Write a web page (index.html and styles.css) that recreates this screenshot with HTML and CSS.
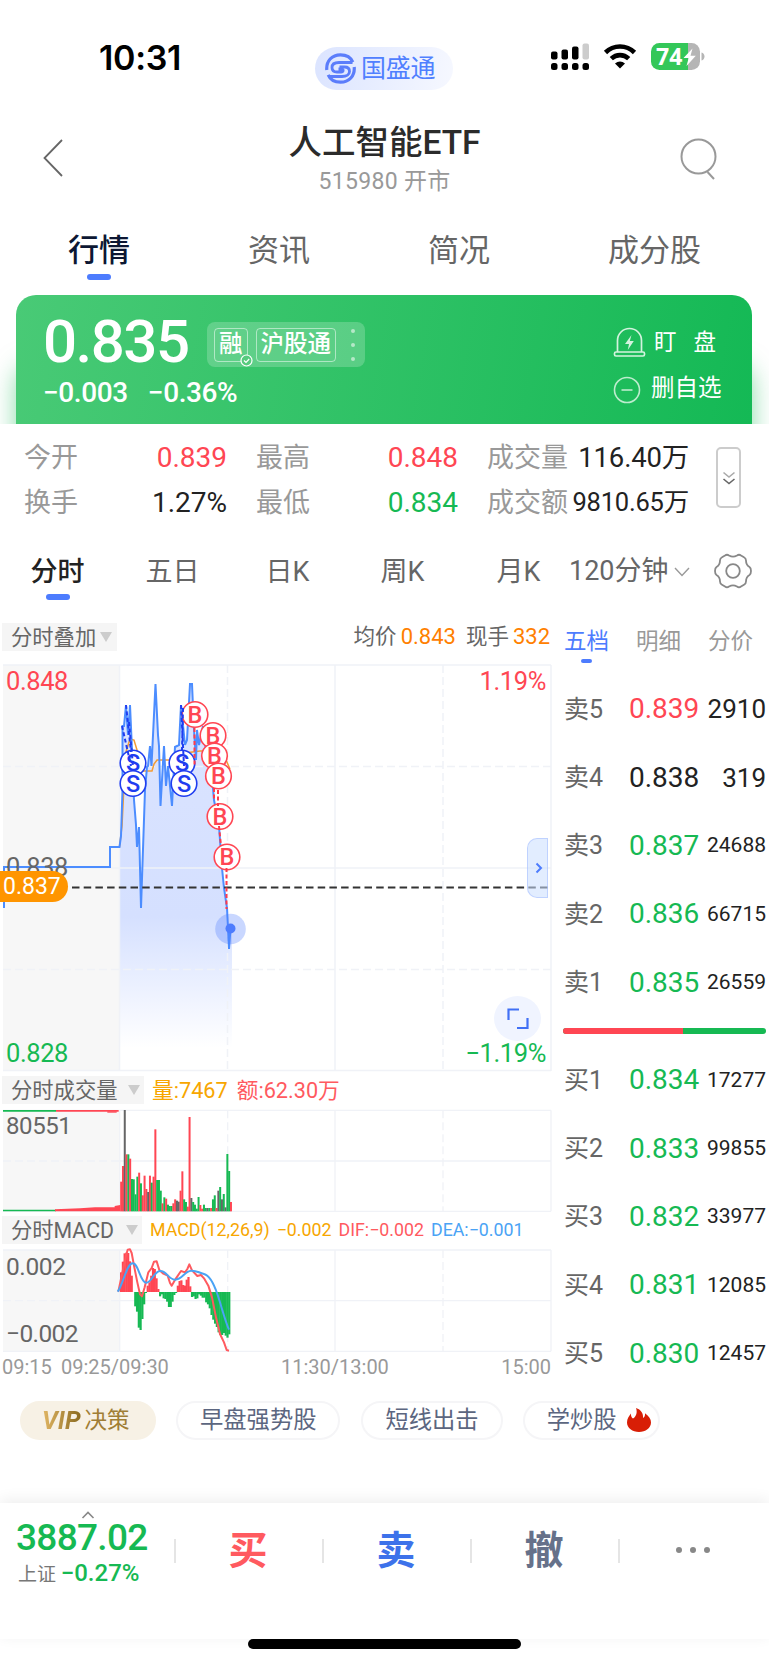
FILE: index.html
```html
<!DOCTYPE html>
<html lang="zh-CN">
<head>
    <meta charset="UTF-8">
    <meta name="viewport" content="width=device-width, initial-scale=1.0">
    <title>人工智能ETF 515980</title>
    <link rel="stylesheet" href="styles.css">
</head>
<body>
    <div class="status-bar">
        <span class="clock">10:31</span>
        <div class="brand">
            <svg width="31" height="31" viewBox="0 0 31 31" fill="none" stroke="#5b7dfb">
                <path d="M1.800 17C1 8 7 1.800 15.500 1.800c6 0 10.500 3 12.300 7.300" stroke-width="3.200"/>
                <path d="M29.200 14C30 23 24 29.200 15.500 29.200c-6 0-10.500-3-12.300-7.300" stroke-width="3.200"/>
                <path d="M27.500 9.500H14c-4.500 0-7 2-7 5s2 4.500 5 4.500h4c2.500 0 3-3 .5-3h-3" stroke-width="2.800"/>
                <path d="M3.500 23.500H17c4.500 0 7.500-2 7.500-5s-2-4.500-5-4.500h-5" stroke-width="2.800"/>
            </svg>
            <span>国盛通</span>
        </div>
        <div class="status-icons">
            <svg width="39" height="28" viewBox="0 0 39 28">
                <rect x="0" y="8.500" width="6.500" height="8" rx="2"/>
                <rect x="10.500" y="6.500" width="6.500" height="10" rx="2"/>
                <rect x="21" y="3.500" width="6.500" height="13" rx="2"/>
                <rect x="31.500" y="0.500" width="6.500" height="16" rx="2" fill="#ccc"/>
                <rect x="0" y="20" width="6.500" height="7" rx="2.500"/>
                <rect x="10.500" y="20" width="6.500" height="7" rx="2.500"/>
                <rect x="21" y="20" width="6.500" height="7" rx="2.500"/>
                <rect x="31.500" y="20" width="6.500" height="7" rx="2.500"/>
            </svg>
            <svg class="wifi" width="34" height="26" viewBox="0 0 34 26" fill="none" stroke="#000" stroke-width="4.600">
                <path d="M2.500 9.500c8-8 21-8 29 0"/>
                <path d="M8.300 15.700c5-4.800 12.400-4.800 17.400 0"/>
                <path d="M12 20.500c3-2.800 7-2.800 10 0l-5 5z" fill="#000" stroke="none"/>
            </svg>
            <div class="battery">
                <span class="cell">74</span>
                <svg width="54" height="28" viewBox="0 0 54 28">
                    <path d="M50.500 9.500c4 1 4 7 0 8z" fill="#b5b5b5"/>
                    <path d="M41.500 5.500L32.500 15h5.200l-2.200 8 9.300-10.300h-5.300z" fill="#fff"/>
                </svg>
            </div>
        </div>
    </div>

    <div class="title-bar">
        <svg class="back" width="20" height="38" viewBox="0 0 20 38" fill="none" stroke="#666" stroke-width="1.800"><path d="M19 1L1.500 19 19 37"/></svg>
        <div class="title">
            <h1>人工智能ETF</h1>
            <p>515980 开市</p>
        </div>
        <svg class="search" width="38" height="43" viewBox="0 0 38 43" fill="none" stroke="#999" stroke-width="2"><circle cx="18.500" cy="18.500" r="17"/><path d="M27.500 34l6.500 7"/></svg>
    </div>

    <div class="main-tabs">
        <span class="active">行情</span>
        <span>资讯</span>
        <span>简况</span>
        <span>成分股</span>
    </div>

    <div class="quote-wrap">
        <div class="quote-card">
            <div class="quote-left">
                <div class="price-row">
                    <span class="price">0.835</span>
                    <div class="badges">
                        <span class="badge margin-badge">融
                            <svg width="13" height="13" viewBox="0 0 13 13"><circle cx="6.500" cy="6.500" r="5.500" fill="#57cb7e" stroke="#fff" stroke-width="1.200"/><path d="M4 6.500l2 2L9.200 5" fill="none" stroke="#fff" stroke-width="1.200"/></svg>
                        </span>
                        <span class="badge">沪股通</span>
                        <span class="more-dots"><i></i><i></i><i></i></span>
                    </div>
                </div>
                <div class="change"><span>−0.003</span><span>−0.36%</span></div>
            </div>
            <div class="quote-actions">
                <div class="action">
                    <svg width="33" height="31" viewBox="0 0 33 31" fill="none" stroke="#d3f3de" stroke-width="1.700">
                        <path d="M4.500 25V13.500a12 12 0 0 1 24 0V25"/>
                        <rect x="1.500" y="25" width="30" height="4" rx="1.500"/>
                        <path d="M18.500 8L12 17h4l-1.200 6 6-9h-4z" fill="#d3f3de" stroke="none"/>
                    </svg>
                    <span class="wide">盯盘</span>
                </div>
                <div class="action">
                    <svg width="28" height="28" viewBox="0 0 28 28" fill="none" stroke="#bdecce" stroke-width="1.600"><circle cx="14" cy="14" r="12.500"/><path d="M8.500 14h11"/></svg>
                    <span class="remove">删自选</span>
                </div>
            </div>
        </div>
    </div>

    <div class="stats">
        <div class="stat-grid">
            <div class="stat"><span>今开</span><b class="up">0.839</b></div>
            <div class="stat"><span>最高</span><b class="up">0.848</b></div>
            <div class="stat"><span>成交量</span><b class="amount">116.40万</b></div>
            <div class="stat"><span>换手</span><b>1.27%</b></div>
            <div class="stat"><span>最低</span><b class="down">0.834</b></div>
            <div class="stat"><span>成交额</span><b class="amount small">9810.65万</b></div>
        </div>
        <div class="expand">
            <svg width="14" height="16" viewBox="0 0 14 16" fill="none" stroke-width="1.600"><path d="M1.500 1.500L7 6l5.500-4.500" stroke="#aaa"/><path d="M1.500 8L7 12.500 12.500 8" stroke="#666"/></svg>
        </div>
    </div>

    <div class="period-tabs">
        <span class="active">分时</span>
        <span>五日</span>
        <span>日K</span>
        <span>周K</span>
        <span>月K</span>
        <span class="minutes">120分钟<svg width="16" height="10" viewBox="0 0 16 10" fill="none" stroke="#999" stroke-width="1.400"><path d="M1 1l7 7.500L15 1"/></svg></span>
        <svg class="gear" width="38" height="36" viewBox="0 0 38 36" fill="none" stroke="#888" stroke-width="1.800" stroke-linejoin="round">
            <path d="M11 2.500Q13 1 15 2.500q4 2.200 8 0Q25 1 27 2.500l3 1.800q2 1 2 3.200 0 4.500 3.500 6.500 1.500 1 1.500 4t-1.500 4Q32 24 32 28.500q0 2.200-2 3.200l-3 1.800q-2 1.500-4 0-4-2.200-8 0-2 1.500-4 0l-3-1.800q-2-1-2-3.200Q6 24 2.500 22 1 21 1 18t1.500-4Q6 12 6 7.500q0-2.200 2-3.200z"/>
            <circle cx="19" cy="18" r="6.800"/>
        </svg>
    </div>

    <div class="trade">
        <div class="charts">
            <div class="chart-head">
                <span class="picker overlay-picker">分时叠加<i></i></span>
                <div class="legend"><span>均价</span><b>0.843</b><span>现手</span><b>332</b></div>
            </div>
            <div class="plot price-plot">
                <svg width="552" height="410" viewBox="0 663 552 410">
                    <defs>
                        <linearGradient id="area" x1="0" y1="684" x2="0" y2="1071" gradientUnits="userSpaceOnUse">
                            <stop offset="0" stop-color="#dbe4ff"/>
                            <stop offset="0.600" stop-color="#d5e0ff"/>
                            <stop offset="0.940" stop-color="#fff"/>
                        </linearGradient>
                    </defs>
                    <rect x="3" y="665" width="117" height="406" fill="#f7f7f7"/>
                    <polygon id="price-area" fill="url(#area)"/>
                    <g class="grid">
                        <path d="M3 665H551M3 868H551M3 1070.500H551M119.500 665V1071M335 665V1071M551 665V1071"/>
                        <path class="dashed" d="M3 766.500H551M3 969.500H551M227.500 665V1071M443 665V1071"/>
                    </g>
                    <polyline class="avg-line" points="119.500,847 122,826 124,785 126,752 130,739 134,740 137,750 140,768 143,771 152,771 154,764 157,760 180,760 185,753 200,751 215,751 226,760 230,769"/>
                    <polyline id="price-line" class="price-line"/>
                    <path d="M68 887.500H551" stroke="#333" stroke-width="2" stroke-dasharray="7.500 4.200" stroke-dashoffset="-4"/>
                    <g id="markers"></g>
                    <g class="trade-dash">
                        <path d="M126 705L131 752M122 726L131 766M129 722L133 766M181 705L184 766M183 708L182 750" stroke="#1f3df0"/>
                        <path d="M194.500 728V766M214 788V800M218 790V806M219 826L221 846M226.500 868V909" stroke="#ff3b4b"/>
                    </g>
                    <circle cx="230.500" cy="929" r="15.300" fill="#4d7cfe" opacity="0.300"/>
                    <circle cx="230.500" cy="928.500" r="5" fill="#4d7cfe"/>
                </svg>
                <span class="tick top-left up">0.848</span>
                <span class="tick top-right up">1.19%</span>
                <span class="tick mid-left">0.838</span>
                <span class="tick bottom-left down">0.828</span>
                <span class="tick bottom-right down">−1.19%</span>
                <span class="cursor-price">0.837</span>
                <span class="drawer"><svg width="8" height="12" viewBox="0 0 8 12" fill="none" stroke="#4d7cfe" stroke-width="2"><path d="M1.500 1.500L6 6l-4.500 4.500"/></svg></span>
                <span class="fullscreen"><svg width="22" height="22" viewBox="0 0 22 22" fill="none" stroke="#4170f5" stroke-width="2.200"><path d="M1.500 12V1.500H12M20.500 10v10H10"/></svg></span>
            </div>

            <div class="chart-head volume-head">
                <span class="picker volume-picker">分时成交量<i></i></span>
                <div class="volume-values"><span class="yellow">量:7467</span><span class="coral">额:62.30万</span></div>
            </div>
            <div class="plot">
                <svg width="552" height="105" viewBox="0 114 1656 315">
                    <rect x="9" y="120" width="350" height="304" fill="#f7f7f7"/>
                    <g class="grid grid-wide">
                        <path d="M9 121H1653M359 273H1653M9 424H1653M359 121V424M1005 121V424M1653 121V424"/>
                        <path class="dashed" d="M9 273H359M683 121V424M1329 121V424"/>
                    </g>
                    <path d="M9 122.500H168M9 421.500H168" stroke="#16b953" stroke-width="5"/>
                    <path d="M168 122.500H356" stroke="#ff4653" stroke-width="5"/>
                    <path d="M322 126H350" stroke="#ff4653" stroke-width="4"/>
                    <path d="M165 424V418L240 415 285 412H344V408L361 405V424z" fill="#ff4653"/>
                    <g id="volume-bars"></g>
                </svg>
                <span class="tick volume-tick">80551</span>
            </div>

            <div class="chart-head macd-head">
                <span class="picker macd-picker">分时MACD<i></i></span>
                <div class="macd-values"><span class="yellow">MACD(12,26,9)</span><span class="yellow">−0.002</span><span class="coral">DIF:−0.002</span><span class="azure">DEA:−0.001</span></div>
            </div>
            <div class="plot">
                <svg width="552" height="105" viewBox="0 537 1656 315">
                    <rect x="9" y="543" width="350" height="304" fill="#f7f7f7"/>
                    <g class="grid grid-wide">
                        <path d="M9 543H1653M359 695H1653M9 847H1653M359 543V847M1005 543V847M1653 543V847"/>
                        <path class="dashed" d="M9 695H359M683 543V847M1329 543V847"/>
                    </g>
                    <g id="macd-bars"></g>
                    <polyline class="macd-line" stroke="#ff5a5f" points="355,668 365,620 378,560 383,542 390,541 395,552 402,590 412,640 420,676 426,682 434,655 445,610 455,597 462,578 470,577 478,603 490,614 503,620 510,642 515,650 528,628 543,606 555,610 562,600 568,586 576,604 592,621 603,618 612,628 625,650 636,685 648,745 660,795 672,820 680,843 687,845"/>
                    <path class="macd-line" stroke="#4aa3f5" d="M353 668C368 650 380 583 398 583S420 640 438 641 462 604 482 606 505 631 525 632 555 606 573 605 595 611 612 615 640 640 652 675 675 755 687 782"/>
                </svg>
                <span class="tick macd-top">0.002</span>
                <span class="tick macd-bottom">−0.002</span>
            </div>
            <div class="time-axis"><span>09:15</span><span>09:25/09:30</span><span>11:30/13:00</span><span class="close">15:00</span></div>
        </div>

        <div class="depth">
            <div class="depth-tabs"><span class="active">五档</span><span>明细</span><span>分价</span></div>
            <div class="depth-rows" id="sells"></div>
            <div class="ratio"><i></i></div>
            <div class="depth-rows" id="buys"></div>
        </div>
    </div>

    <div class="chips">
        <span class="chip vip"><em>VIP</em>决策</span>
        <span class="chip">早盘强势股</span>
        <span class="chip">短线出击</span>
        <span class="chip fire">学炒股
            <svg width="24" height="24" viewBox="0 0 24 24"><path d="M9 0c5 1.500 7.500 5.500 7 10 1.500-.8 2.300-2.500 2-4.800C22 8 24 11 24 14.500 24 20 18.500 24 12 24S0 20 0 14.500c0-4 2-6.500 4-9-.2 2.500.5 4 2 5C9.500 8.500 10.500 4 9 0z" fill="#d81e06"/></svg>
        </span>
    </div>

    <div class="bottom-bar">
        <div class="index">
            <svg width="14" height="8" viewBox="0 0 14 8" fill="none" stroke="#888" stroke-width="1.600"><path d="M1.500 7L7 1.500 12.500 7"/></svg>
            <span class="index-value">3887.02</span>
            <span class="index-name">上证 <b>−0.27%</b></span>
        </div>
        <span class="trade-button buy">买</span>
        <span class="trade-button sell">卖</span>
        <span class="trade-button cancel">撤</span>
        <span class="trade-button dots"><i></i><i></i><i></i></span>
    </div>
    <div class="home-indicator"></div>

    <script src="script.js"></script>
</body>
</html>
```

FILE: styles.css
```css
* {
    box-sizing: border-box;
}
body {
    margin: 0;
    width: 769px;
    height: 1665px;
    overflow: hidden;
    background: #fff;
    color: #222;
    font-family: Roboto, "Noto Sans CJK SC", sans-serif;
    line-height: 1;
    white-space: nowrap;
}
h1, p {
    margin: 0;
}
b {
    font-weight: 400;
}
svg {
    display: block;
    flex: none;
}
.up {
    color: #ff4653;
}
.down {
    color: #16b953;
}

/* status bar */
.status-bar {
    height: 110px;
    display: grid;
    grid-template-columns: 315px 138px 1fr;
    align-items: start;
}
.clock {
    font-family: Inter, sans-serif;
    font-size: 34px;
    font-weight: 600;
    letter-spacing: -0.3px;
    color: #000;
    padding: 41px 0 0 99px;
}
.brand {
    margin-top: 47px;
    height: 43px;
    border-radius: 22px;
    background: linear-gradient(100deg, #dbe4ff, #f6f8ff);
    display: flex;
    align-items: center;
    padding-left: 10px;
    gap: 5px;
    font-size: 25px;
    color: #5080ff;
}
.brand span {
    letter-spacing: -0.2px;
    padding-bottom: 1px;
}
.status-icons {
    display: flex;
    padding: 43px 0 0 98px;
}
.wifi {
    margin-left: 13px;
}
.battery {
    margin-left: 14px;
    display: grid;
}
.battery > * {
    grid-area: 1 / 1;
}
.cell {
    width: 49px;
    height: 27px;
    border-radius: 8.5px;
    background: linear-gradient(90deg, #34c759 37px, #b5b5b5 37px);
    color: #fff;
    font: 700 23px/27px "Open Sans", sans-serif;
    padding-left: 5px;
}

/* title */
.title-bar {
    height: 110px;
    display: grid;
    grid-template-columns: 140px 1fr 140px;
}
.back {
    margin: 29px 0 0 43px;
}
.title {
    text-align: center;
    padding-top: 16px;
}
.title h1 {
    font-size: 33.500px;
    font-weight: 500;
    line-height: 34px;
    color: #2b2b2b;
}
.title p {
    margin-top: 10px;
    font-size: 23px;
    line-height: 23px;
    letter-spacing: 0.3px;
    color: #999;
}
.search {
    margin: 28px 0 0 51px;
}

.main-tabs {
    height: 75px;
    display: flex;
    padding: 14px 0 0 68px;
    gap: 118px;
    font-size: 31px;
    line-height: 34px;
    color: #666;
}
.main-tabs .active {
    color: #0c1733;
    font-weight: 500;
}
.active::after {
    content: "";
    display: block;
    width: 24px;
    height: 6px;
    border-radius: 3px;
    background: #4d7cfe;
    margin: 6px auto 0;
}

/* quote card */
.quote-wrap {
    height: 129px;
    padding: 0 17px 0 16px;
    overflow: hidden;
}
.quote-card {
    height: 129px;
    border-radius: 20px 20px 0 0;
    background: linear-gradient(100deg, #49ca76, #14b955);
    box-shadow: 0 70px 24px rgba(22, 185, 83, 0.5);
    color: #fff;
    display: flex;
    justify-content: space-between;
    padding: 0 31px 0 27px;
}
.price-row {
    display: flex;
    align-items: flex-start;
}
.price {
    width: 164px;
    font-size: 60px;
    font-weight: 500;
    letter-spacing: -1.5px;
    padding-top: 17px;
}
.badges {
    margin-top: 27px;
    width: 158px;
    height: 45px;
    border-radius: 8px;
    background: rgba(255, 255, 255, 0.2);
    display: flex;
    align-items: center;
    padding-left: 7px;
    gap: 8px;
}
.badge {
    position: relative;
    height: 34px;
    border: 1px solid rgba(255, 255, 255, 0.5);
    border-radius: 4px;
    font-size: 23.5px;
    font-weight: 500;
    line-height: 31px;
    padding: 0 4px;
}
.margin-badge svg {
    position: absolute;
    right: -6px;
    bottom: -6px;
}
.more-dots {
    display: flex;
    flex-direction: column;
    gap: 10px;
    margin-left: 7px;
}
.more-dots i {
    width: 4px;
    height: 4px;
    border-radius: 50%;
    background: #b5e8c8;
}
.change {
    display: flex;
    gap: 20px;
    margin-top: 7px;
    font-size: 28px;
    font-weight: 500;
    letter-spacing: -0.4px;
}
.quote-actions {
    padding-top: 32px;
    width: 108px;
}
.action {
    display: flex;
    align-items: center;
    gap: 8px;
    height: 31px;
    font-size: 22.500px;
    margin-bottom: 16px;
}
.action .wide {
    letter-spacing: 17px;
    padding-bottom: 1px;
}
.action .remove {
    font-size: 23.500px;
    padding: 0 0 1px 2px;
}

/* stats */
.stats {
    height: 111px;
    display: flex;
}
.stat-grid {
    width: 689px;
    padding: 11px 0 0 24px;
    display: grid;
    grid-template-columns: 203px 202px 202px;
    grid-template-rows: 45px 45px;
    column-gap: 29px;
}
.stat {
    display: flex;
    justify-content: space-between;
    align-items: center;
    font-size: 27px;
    color: #999;
}
.stat span {
    padding-top: 2px;
}
.stat b {
    font-size: 28px;
    color: #222;
}
.stat b.up {
    color: #ff4653;
}
.stat b.down {
    color: #16b953;
}
.stat b.amount {
    font-size: 27.5px;
    letter-spacing: -0.2px;
}
.stat b.small {
    font-size: 25.500px;
    letter-spacing: -0.2px;
}
.expand {
    width: 25px;
    height: 61px;
    margin: 23px 0 0 27px;
    border: 2px solid #ccc;
    border-radius: 5px;
    display: flex;
    align-items: center;
    justify-content: center;
    padding-top: 3px;
}

.period-tabs {
    height: 77px;
    display: grid;
    grid-template-columns: 115px 115px 115px 115px 109px 145px 38px;
    padding-top: 21px;
    font-size: 27px;
    line-height: 33px;
    text-align: center;
    color: #666;
}
.period-tabs .active {
    color: #222;
    font-weight: 500;
}
.period-tabs .active::after {
    margin-top: 5px;
}
.period-tabs .minutes {
    display: flex;
    align-items: center;
    gap: 5px;
    height: 31px;
    text-align: left;
    font-size: 27px;
}
.gear {
    margin-top: -3px;
}
.period-tabs span:nth-child(5) {
    padding-left: 8px;
}

/* charts */
.trade {
    display: grid;
    grid-template-columns: 552px 1fr;
    height: 775px;
}
.chart-head {
    height: 51px;
    display: flex;
    align-items: flex-start;
    justify-content: space-between;
    padding: 11px 2px 0;
}
.picker {
    height: 28px;
    background: #f5f5f5;
    font-size: 21.300px;
    line-height: 27px;
    color: #666;
    padding-left: 9px;
    display: flex;
    align-items: center;
}
.picker i {
    border: 6px solid transparent;
    border-top: 10px solid #ccc;
    border-bottom: 0;
}
.overlay-picker {
    width: 115px;
}
.overlay-picker i {
    margin-left: 4px;
}
.legend {
    display: flex;
    font-size: 21.500px;
    line-height: 28px;
    color: #666;
}
.legend b {
    color: #ff8000;
    font-size: 22px;
    margin-left: 4px;
}
.legend b + span {
    margin-left: 10px;
}
.plot {
    position: relative;
}
.grid {
    fill: none;
    stroke: #f0f2f7;
    stroke-width: 1.5;
}
.grid-wide {
    stroke-width: 4;
}
.dashed {
    stroke-dasharray: 8 4;
}
.grid-wide .dashed {
    stroke-dasharray: 24 12;
}
.price-line {
    fill: none;
    stroke: #4c8dff;
    stroke-width: 2;
}
.avg-line {
    fill: none;
    stroke: #f39c34;
    stroke-width: 1.500;
}
.trade-dash {
    fill: none;
    stroke-width: 2;
    stroke-dasharray: 4 2.500;
}
.marker {
    font: 500 23.5px Roboto, sans-serif;
    text-anchor: middle;
}
.macd-line {
    fill: none;
    stroke-width: 6;
    stroke-linejoin: round;
}
.tick {
    position: absolute;
    left: 6px;
    font-size: 25.500px;
    line-height: 26px;
    color: #666;
    letter-spacing: -0.4px;
}
.tick.up {
    color: #ff4653;
}
.tick.down {
    color: #16b953;
}
.top-left, .top-right {
    top: 5px;
}
.top-right, .bottom-right {
    left: auto;
    right: 6px;
}
.mid-left {
    top: 191px;
}
.bottom-left, .bottom-right {
    bottom: 7px;
}
.cursor-price {
    position: absolute;
    left: 0;
    top: 208px;
    width: 68px;
    height: 31px;
    border-radius: 0 16px 16px 0;
    background: #ff9500;
    color: #fff;
    font-size: 23px;
    line-height: 32px;
    padding-left: 3px;
}
.drawer {
    position: absolute;
    left: 527px;
    top: 175px;
    width: 21px;
    height: 60px;
    border: 1px solid rgba(140, 170, 255, 0.4);
    border-radius: 10px 0 0 10px;
    background: rgba(202, 222, 255, 0.55);
    padding: 23px 0 0 7px;
}
.fullscreen {
    position: absolute;
    left: 494px;
    top: 333px;
    width: 47px;
    height: 45px;
    border-radius: 50%;
    background: #f0f4ff;
    padding: 12px 0 0 13px;
}
.volume-head {
    height: 35px;
    padding-top: 3px;
    justify-content: flex-start;
}
.volume-picker {
    width: 142px;
}
.volume-picker i, .macd-picker i {
    margin-left: auto;
    margin-right: 4px;
}
.volume-values {
    display: flex;
    gap: 9px;
    margin-left: 8px;
    font-size: 21.700px;
    line-height: 29px;
}
.yellow {
    color: #f7a600;
}
.coral {
    color: #ff5a5f;
}
.azure {
    color: #4aa3f5;
}
.volume-tick {
    top: 5px;
    font-size: 24px;
}
.macd-head {
    height: 35px;
    padding-top: 3px;
    justify-content: flex-start;
}
.macd-picker {
    width: 140px;
}
.macd-values {
    display: flex;
    gap: 7px;
    margin-left: 8px;
    font-size: 17.800px;
    line-height: 28px;
}
.macd-top {
    top: 6px;
    font-size: 24.500px;
}
.macd-bottom {
    bottom: 6px;
    font-size: 24.500px;
    letter-spacing: -0.6px;
}
.time-axis {
    display: grid;
    grid-template-columns: 59px 220px 1fr auto;
    padding: 4px 1px 0 2px;
    font-size: 20px;
    line-height: 20px;
    color: #999;
}

/* order book */
.depth {
    padding: 0 3px 0 12px;
}
.depth-tabs {
    height: 63px;
    display: flex;
    gap: 27px;
    padding-top: 16px;
    font-size: 22.500px;
    line-height: 26px;
    color: #999;
}
.depth-tabs .active {
    color: #4d7cfe;
}
.depth-tabs .active::after {
    width: 11px;
    height: 4px;
    margin-top: 5px;
}
.depth-row {
    height: 68.4px;
    display: grid;
    grid-template-columns: 65px 1fr auto;
    align-items: center;
    font-size: 25px;
    color: #666;
}
.depth-price {
    font-size: 28px;
}
.depth-volume {
    font-size: 26px;
    color: #222;
}
.depth-volume.long {
    font-size: 21px;
}
.depth-price.flat {
    color: #222;
}
.ratio {
    height: 6px;
    margin: 11px 0 12px -1px;
    border-radius: 3px;
    overflow: hidden;
    background: #16b953;
}
.ratio i {
    display: block;
    width: 59.3%;
    height: 6px;
    background: #ff4653;
}

/* chips */
.chips {
    display: flex;
    padding: 14px 0 0 20px;
    height: 116px;
}
.chip {
    height: 39px;
    border: 2px solid #f5f5f7;
    border-radius: 20px;
    padding: 0 22px;
    margin-right: 21px;
    font-size: 23.300px;
    line-height: 35px;
    color: #5c6680;
    display: flex;
}
.chip.vip {
    width: 136px;
    background: #f7f1e5;
    border-color: #f7f1e5;
    color: #a07e35;
    margin-right: 20px;
    padding: 0 20px;
    font-size: 22.500px;
}
.vip em {
    font-weight: 700;
    font-size: 25px;
    line-height: 36px;
    margin-right: 4px;
    background: linear-gradient(90deg, #e2b765, #8a6a1f);
    -webkit-background-clip: text;
    color: transparent;
}
.chip.fire {
    margin: 0 0 0 -1px;
    padding-right: 7px;
    gap: 10px;
}
.fire svg {
    margin-top: 5px;
}

/* bottom bar */
.bottom-bar {
    height: 136px;
    display: grid;
    grid-template-columns: 174px 148px 148px 148px 149px;
    box-shadow: 0 -3px 14px rgba(0, 0, 0, 0.07);
    background: #fff;
    position: relative;
}
.index {
    padding: 8px 0 0 16px;
}
.index svg {
    margin-left: 65px;
}
.index-value {
    display: block;
    font-size: 37px;
    line-height: 37px;
    letter-spacing: -0.7px;
    font-weight: 500;
    color: #16b953;
}
.index-name {
    display: block;
    margin-top: 4px;
    padding-left: 2px;
    font-size: 19px;
    line-height: 26px;
    color: #777;
}
.index-name b {
    color: #16b953;
    font-size: 24px;
    font-weight: 500;
}
.trade-button {
    height: 97px;
    display: flex;
    align-items: center;
    justify-content: center;
    font-size: 39px;
    font-weight: 700;
    background: linear-gradient(#e5e5e5, #e5e5e5) 0 36px / 2px 24px no-repeat;
}
.buy {
    color: #ff5a5f;
}
.sell {
    color: #3d72ea;
}
.cancel {
    color: #66718a;
}
.dots {
    gap: 8px;
    padding: 0 0 3px 0;
}
.dots i {
    width: 6px;
    height: 6px;
    border-radius: 50%;
    background: #888;
}
.home-indicator {
    position: relative;
    width: 273px;
    height: 10px;
    border-radius: 5px;
    background: #000;
    margin: 0 auto;
}
```

FILE: script.js
```javascript
var SVG = "http://www.w3.org/2000/svg";
var colors = { r: "#ff4653", g: "#16b953", k: "#666" };

var price = "4,908 4,867 110,867 110,847 119.5,847 121,836 122.5,790 122.5,726 124,726 126,705 128,735 130,705 132,750 134,800 136,825 137,847 139,827 141,908 145,790 147,767 148,766 150,746 151.5,766 155.5,684 158,735 159,746 160.5,806 164,746 166,786 168,766 172,806 175,747 179,745 181,705 185,745 187,740 190,684 192,684 194,730 196,760 197,730 199,745 203,726 205,745 211,765 214,800 219,826 222,868 224,888 227,908 229,949 230.5,929";
document.getElementById("price-line").setAttribute("points", price);
// fill only covers the session after the opening auction
document.getElementById("price-area").setAttribute("points", "119.5,1071 " + price.slice(price.indexOf("119.5")) + " 232,929 232,1071");

var markers = [
    ["S", 133, 763], ["S", 133, 783.5], ["S", 182, 763], ["S", 184, 783.5],
    ["B", 195, 714.5], ["B", 213, 735.5], ["B", 214.5, 756], ["B", 218.5, 776], ["B", 220, 816.5], ["B", 227, 857]
];

function add(parent, name, attrs) {
    var el = document.createElementNS(SVG, name);
    for (var key in attrs) {
        el.setAttribute(key, attrs[key]);
    }
    parent.appendChild(el);
    return el;
}

markers.forEach(function(m) {
    var group = document.getElementById("markers");
    var color = m[0] === "S" ? "#1f3df0" : "#ff4653";
    add(group, "circle", { cx: m[1], cy: m[2], r: 12.8, fill: "#fff", stroke: color, "stroke-width": 1.6 });
    add(group, "text", { x: m[1], y: m[2] + 8.3, "class": "marker", fill: color }).textContent = m[0];
});

var volumes = "r335 r288 k120 r253 g253 r266 g327 g328 g373 g320 r308 g340 r376 r317 r357 k366 r317 g338 r320 r178 g330 g330 g362 r400 g382 r386 g404 g408 g408 r400 r388 k392 k395 r362 r304 g388 g396 r410 r141 k384 g396 g404 g416 g381 r405 r416 g404 g414 k414 g414 r414 g388 g376 r414 k362 g351 k388 g372 k412 g252 g303 r396".split(" ");
volumes.forEach(function(v, i) {
    var top = Number(v.slice(1));
    add(document.getElementById("volume-bars"), "rect", { x: 360.5 + i * 5.4, y: top, width: 6, height: 424 - top, fill: colors[v[0]] });
});

var macd = [610, 578, 553, 551, 552, 577, 620, 669, 712, 728, 776, 783, 750, 706, 672, 650, 640, 620, 597, 600, 628, 660, 682, 676, 688, 690, 698, 714, 714, 698, 678, 672, 650, 636, 634, 648, 650, 632, 624, 652, 684, 682, 690, 688, 676, 680, 686, 686, 700, 706, 718, 738, 752, 764, 774, 790, 798, 798, 792, 800, 806, 796];
macd.forEach(function(y, i) {
    add(document.getElementById("macd-bars"), "rect", { x: 360 + i * 5.32, y: Math.min(y, 669), width: 6.6, height: Math.abs(y - 669), fill: y < 669 ? colors.r : colors.g });
});

function fillDepth(id, rows) {
    document.getElementById(id).innerHTML = rows.map(function(row) {
        return '<div class="depth-row"><span>' + row[0] + '</span><span class="depth-price ' + row[3] + '">' + row[1] +
            '</span><span class="depth-volume' + (row[2].length > 4 ? " long" : "") + '">' + row[2] + '</span></div>';
    }).join("");
}

fillDepth("sells", [
    ["卖5", "0.839", "2910", "up"],
    ["卖4", "0.838", "319", "flat"],
    ["卖3", "0.837", "24688", "down"],
    ["卖2", "0.836", "66715", "down"],
    ["卖1", "0.835", "26559", "down"]
]);
fillDepth("buys", [
    ["买1", "0.834", "17277", "down"],
    ["买2", "0.833", "99855", "down"],
    ["买3", "0.832", "33977", "down"],
    ["买4", "0.831", "12085", "down"],
    ["买5", "0.830", "12457", "down"]
]);
```
